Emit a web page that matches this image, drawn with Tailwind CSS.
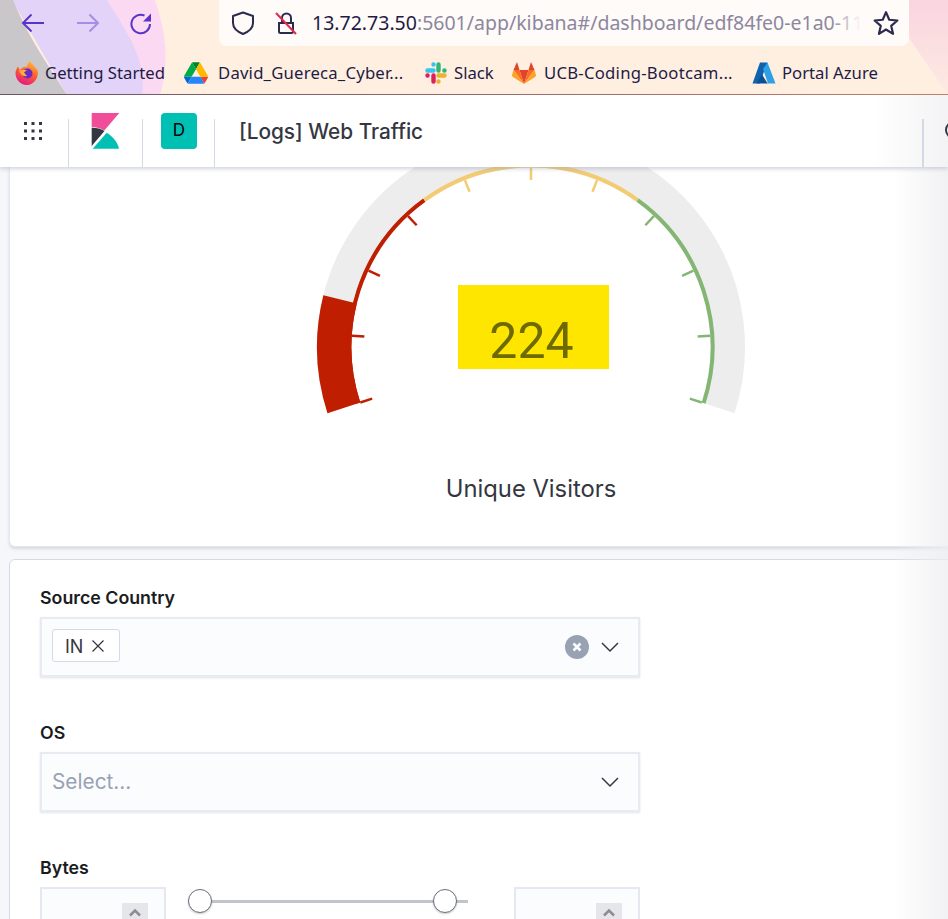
<!DOCTYPE html>
<html lang="en">
<head>
  <meta charset="UTF-8" />
  <title>[Logs] Web Traffic</title>
  <script src="https://cdn.jsdelivr.net/npm/@tailwindcss/browser@4"></script>
</head>
<body class="bg-[#f5f7fa]">
  <div class="relative w-[948px] h-[919px] overflow-hidden flex flex-col font-['Inter',sans-serif]">

    <!-- browser toolbar -->
    <div class="relative h-[95px] shrink-0 bg-[#feefe1] overflow-hidden">
      <svg class="absolute inset-0" width="948" height="95" viewBox="0 0 948 95">
        <defs><linearGradient id="tr" x1="0" y1="0" x2="0" y2="1"><stop offset="0" stop-color="#f9d5df"/><stop offset="1" stop-color="#fdeae2"/></linearGradient></defs>
        <path d="M105 0H155C165 30 170 60 160 95H67Z" fill="#fbd9f3"/>
        <path d="M12 0H107C125 30 148 60 142 95H67Z" fill="#e3d3f8"/>
        <path d="M0 0H13C30 40 45 60 67 95H0Z" fill="#c9c7c9"/>
        <path d="M905 0H948V95L905 32Z" fill="url(#tr)"/>
      </svg>
      <div class="relative flex h-[46px]">
        <div class="w-[219px] shrink-0 flex items-center pl-[21px] gap-[31px]">
          <svg width="24" height="24" viewBox="0 0 24 24" fill="none" stroke="#5a34c8" stroke-width="2"><path d="M23 12H2M10.500 3.500L2 12L10.500 20.500"/></svg>
          <svg width="24" height="24" viewBox="0 0 24 24" fill="none" stroke="#a48fe6" stroke-width="2"><path d="M1 12H22M13.500 3.500L22 12L13.500 20.500"/></svg>
          <svg class="-ml-px" width="24" height="24" viewBox="0 0 24 24" fill="none"><path d="M20 13A9.300 9.300 0 1 1 14.500 4.500" stroke="#5a34c8" stroke-width="2"/><path d="M21 2.500V10.500H13Z" fill="#5a34c8"/></svg>
        </div>
        <div class="w-[690px] shrink-0 flex items-center bg-[#fffbf8] rounded-b-lg pl-[12px]">
          <svg class="shrink-0" width="24" height="24" viewBox="0 0 24 24" fill="none" stroke="#2c2a4e" stroke-width="2" stroke-linejoin="round"><path d="M12 1.500L22 5V12C22 17 18 20.500 12 23C6 20.500 2 17 2 12V5Z"/></svg>
          <svg class="shrink-0 ml-[19px]" width="24" height="24" viewBox="0 0 24 24" fill="none" stroke-width="2"><path d="M8 12V7A4.500 4.500 0 0 1 17 7V12M5 12H19V20.500A1.500 1.500 0 0 1 17.500 22H6.500A1.500 1.500 0 0 1 5 20.500Z" stroke="#2c2a4e"/><path d="M2 2L22 23" stroke="#e4294f"/></svg>
          <div class="relative flex-1 min-w-0 ml-[14px] whitespace-nowrap text-[19.500px] font-['Noto_Sans',sans-serif] text-[#8d86a0]">
            <span class="text-[#1e1b45]">13.72.73.50</span>:5601/app/kibana#/dashboard/edf84fe0-e1a0-11
            <div class="absolute right-0 top-0 bottom-0 w-[30px] bg-linear-to-r from-[#fffbf8]/0 to-[#fffbf8]"></div>
          </div>
          <svg class="shrink-0 ml-[12px] mr-[10px]" width="26" height="26" viewBox="0 0 24 24" fill="none" stroke="#2c2a4e" stroke-width="2" stroke-linejoin="round"><path d="M12 2L15 9L22.500 9.700L16.800 14.600L18.500 22L12 18L5.500 22L7.200 14.600L1.500 9.700L9 9Z"/></svg>
        </div>
      </div>

      <!-- bookmarks -->
      <div class="relative flex items-center h-[48px] pt-[6px] pl-[15px] text-[16.700px] text-[#1e1b45] font-['Noto_Sans',sans-serif] whitespace-nowrap">
        <div class="w-[169px] flex items-center gap-[6px]">
          <svg width="24" height="24" viewBox="0 0 24 24">
            <defs><linearGradient id="fx" x1="0.700" y1="0" x2="0.300" y2="1"><stop offset="0" stop-color="#ffbd30"/><stop offset="0.500" stop-color="#ff5a36"/><stop offset="1" stop-color="#e31587"/></linearGradient></defs>
            <path d="M15 0C17 3 20 6 22.500 9C24.500 16 19 24 12 24C5 24 .5 18 .5 12C.5 9 2 7 3 5.500L5 9C7 6 10 5 12 6C12 4 13 2 15 0Z" fill="url(#fx)"/>
            <circle cx="12.500" cy="12.500" r="5" fill="#6a2bc4"/>
            <path d="M4 9H12L9 11.500L12 15C8 16 5 13 4 9Z" fill="#ffb03a"/>
          </svg>
          <span>Getting Started</span>
        </div>
        <div class="w-[240px] flex items-center gap-[10px]">
          <svg width="24" height="22" viewBox="0 0 87.300 78">
            <path d="m6.600 66.850 3.850 6.650c.8 1.400 1.950 2.500 3.300 3.300l13.750-23.800h-27.500c0 1.550.4 3.100 1.200 4.500z" fill="#0066da"/>
            <path d="m43.650 25-13.750-23.800c-1.350.8-2.500 1.900-3.300 3.300l-25.400 44a9.060 9.060 0 0 0 -1.200 4.500h27.500z" fill="#00ac47"/>
            <path d="m73.550 76.800c1.350-.8 2.500-1.900 3.300-3.300l1.600-2.750 7.650-13.250c.8-1.400 1.200-2.950 1.200-4.500h-27.502l5.852 11.500z" fill="#ea4335"/>
            <path d="m43.650 25 13.750-23.800c-1.350-.8-2.900-1.200-4.500-1.200h-18.500c-1.600 0-3.150.45-4.500 1.200z" fill="#00832d"/>
            <path d="m59.800 53h-32.300l-13.750 23.800c1.350.8 2.900 1.200 4.500 1.200h50.800c1.600 0 3.150-.45 4.500-1.200z" fill="#2684fc"/>
            <path d="m73.400 26.500-12.700-22c-.8-1.400-1.950-2.500-3.300-3.300l-13.750 23.800 16.150 28h27.450c0-1.550-.4-3.100-1.200-4.500z" fill="#ffba00"/>
          </svg>
          <span class="tracking-[0.2px]">David_Guereca_Cyber...</span>
        </div>
        <div class="w-[88px] flex items-center gap-[6px]">
          <svg width="24" height="24" viewBox="0 0 24 24" fill="none" stroke-width="4.400" stroke-linecap="round">
            <path d="M3.500 9.500H9.500M9.500 3.500V3.600" stroke="#36c5f0"/>
            <path d="M14.500 3.500V9.500M20.500 9.500H20.400" stroke="#2eb67d"/>
            <path d="M14.500 14.500H20.500M14.500 20.500V20.400" stroke="#ecb22e"/>
            <path d="M9.500 14.500V20.500M3.500 14.500H3.600" stroke="#e01e5a"/>
          </svg>
          <span>Slack</span>
        </div>
        <div class="w-[240px] flex items-center gap-[8px]">
          <svg width="24" height="24" viewBox="0 0 24 24">
            <path d="M12 23L7.500 9H16.500Z" fill="#e24329"/>
            <path d="M12 23L7.500 9H1.500Z" fill="#fc6d26"/>
            <path d="M12 23L16.500 9H22.500Z" fill="#fc6d26"/>
            <path d="M1.500 9L0 14C0 15 .5 15.500 1 16L12 23Z" fill="#fca326"/>
            <path d="M22.500 9L24 14C24 15 23.500 15.500 23 16L12 23Z" fill="#fca326"/>
            <path d="M7.500 9L5 1L1.500 9Z" fill="#e24329"/>
            <path d="M16.500 9L19 1L22.500 9Z" fill="#e24329"/>
          </svg>
          <span class="tracking-[0.25px]">UCB-Coding-Bootcam...</span>
        </div>
        <div class="flex items-center gap-[6px]">
          <svg width="24" height="24" viewBox="0 0 24 24">
            <path d="M8 1.500H15.500L7.500 22.500H.5Z" fill="#0f62ad"/>
            <path d="M10 13.500L15 21.500L16 22.500H4.500Z" fill="#0a4f94"/>
            <path d="M15.500 1.500L23.500 22.500H16L11 8Z" fill="#2f9fe6"/>
          </svg>
          <span>Portal Azure</span>
        </div>
      </div>
      <div class="relative h-px bg-linear-to-r from-[#66545e] to-[#c2806f]"></div>
    </div>

    <!-- kibana header -->
    <div class="relative z-30 h-[72px] shrink-0 flex bg-linear-to-r from-white from-[92%] to-[#f3f3f5] shadow-[0_2px_4px_rgba(152,162,179,0.45)] overflow-hidden">
      <div class="w-[68px] shrink-0 flex items-center pl-[24px]">
        <svg width="18" height="18" viewBox="0 0 18 18" fill="#343741">
          <rect x="0" y="0" width="3" height="3"/><rect x="7.500" y="0" width="3" height="3"/><rect x="15" y="0" width="3" height="3"/>
          <rect x="0" y="7.500" width="3" height="3"/><rect x="7.500" y="7.500" width="3" height="3"/><rect x="15" y="7.500" width="3" height="3"/>
          <rect x="0" y="15" width="3" height="3"/><rect x="7.500" y="15" width="3" height="3"/><rect x="15" y="15" width="3" height="3"/>
        </svg>
      </div>
      <div class="w-px shrink-0 self-end h-[48px] bg-[#d3dae6]"></div>
      <div class="w-[73px] shrink-0 flex items-center pl-[22px]">
        <svg width="29" height="37" viewBox="0 0 29 37">
          <path d="M.7 0H28.300L13.300 17.500C10 15.200 5 14 .7 14Z" fill="#f04e98"/>
          <path d="M.7 14.700C5 14.500 9.500 15.500 13.500 18L.7 33Z" fill="#343741"/>
          <path d="M1.700 35.700L15.700 19.700C22 23.500 26.500 29 28 35.700Z" fill="#00bfb3"/>
        </svg>
      </div>
      <div class="w-px shrink-0 self-end h-[48px] bg-[#d3dae6]"></div>
      <div class="w-[71px] shrink-0 flex items-center pl-[18px]">
        <div class="w-[36px] h-[36px] rounded-[4px] bg-[#00bfb3] flex items-center justify-center text-[17px] text-black">D</div>
      </div>
      <div class="w-px shrink-0 self-end h-[48px] bg-[#d3dae6]"></div>
      <div class="flex-1 flex items-center pl-[24px] pt-[2px] text-[20.800px] font-medium text-[#343741]">[Logs] Web Traffic</div>
      <div class="w-[2px] shrink-0 self-end h-[48px] bg-[#d3dae6]"></div>
      <div class="w-[24px] shrink-0 flex items-center pl-[21px]">
        <svg class="shrink-0" width="20" height="20" viewBox="0 0 20 20" fill="none" stroke="#343741" stroke-width="2"><circle cx="9" cy="9" r="8"/></svg>
      </div>
    </div>

    <!-- dashboard -->
    <div class="flex-1 min-h-0 pl-[9px] flex flex-col gap-[12px] overflow-hidden">
      <div class="w-[1040px] h-[380px] shrink-0 bg-white border border-t-0 border-[#e3e7ef] rounded-b-[6px] shadow-[0_2px_3px_rgba(152,162,179,0.35)]">
        <div class="relative ml-[301px] w-[440px]">
          <svg class="block" width="440" height="260" viewBox="311 167 440 260" fill="none">
            <path d="M343.880 407.800A196.750 196.750 0 1 1 718.120 407.800" stroke="#ededed" stroke-width="34.500"/>
            <path d="M343.880 407.800A196.750 196.750 0 0 1 340.090 299.400" stroke="#bf1e00" stroke-width="34.500"/>
            <path d="M358.380 403.090A181.500 181.500 0 0 1 424.320 200.160" stroke="#bf1e00" stroke-width="4"/>
            <path d="M424.320 200.160A181.500 181.500 0 0 1 637.680 200.160" stroke="#f2cb73" stroke-width="4"/>
            <path d="M637.680 200.160A181.500 181.500 0 0 1 703.620 403.090" stroke="#84b673" stroke-width="4"/>
            <g stroke-width="2.500">
              <line x1="531" y1="167.500" x2="531" y2="180" stroke="#bf1e00" transform="rotate(-108 531 347)"/>
              <line x1="531" y1="167.500" x2="531" y2="180" stroke="#bf1e00" transform="rotate(-86.400 531 347)"/>
              <line x1="531" y1="167.500" x2="531" y2="180" stroke="#bf1e00" transform="rotate(-64.800 531 347)"/>
              <line x1="531" y1="167.500" x2="531" y2="180" stroke="#bf1e00" transform="rotate(-43.200 531 347)"/>
              <line x1="531" y1="167.500" x2="531" y2="180" stroke="#f2cb73" transform="rotate(-21.600 531 347)"/>
              <line x1="531" y1="167.500" x2="531" y2="180" stroke="#f2cb73"/>
              <line x1="531" y1="167.500" x2="531" y2="180" stroke="#f2cb73" transform="rotate(21.600 531 347)"/>
              <line x1="531" y1="167.500" x2="531" y2="180" stroke="#84b673" transform="rotate(43.200 531 347)"/>
              <line x1="531" y1="167.500" x2="531" y2="180" stroke="#84b673" transform="rotate(64.800 531 347)"/>
              <line x1="531" y1="167.500" x2="531" y2="180" stroke="#84b673" transform="rotate(86.400 531 347)"/>
              <line x1="531" y1="167.500" x2="531" y2="180" stroke="#84b673" transform="rotate(108 531 347)"/>
            </g>
          </svg>
          <div class="absolute left-[147px] top-[118px] w-[151px] h-[84px] bg-[#ffe600] flex items-center justify-center pt-[27px] pr-[4px] text-[50px] leading-none font-['Roboto',sans-serif] text-[#6e6a00]">224</div>
          <div class="mt-[46px] text-center text-[23.800px] leading-[32px] text-[#343741]">Unique Visitors</div>
        </div>
      </div>

      <div class="w-[1040px] flex-1 bg-white border border-[#d3dae6] rounded-t-[6px] pl-[30px] pt-[26px]">
        <div class="w-[600px]">
          <div class="text-[17.800px] leading-[24px] font-semibold text-[#1a1c21]">Source Country</div>
          <div class="mt-[7px] h-[60px] flex items-center pl-[10px] pr-[17px] bg-[#fbfcfd] border-2 border-[#e9ebf3] shadow-[0_1px_2px_rgba(152,162,179,0.3)]">
            <div class="-mt-[3px] h-[33px] w-[68px] flex items-center pl-[12px] pt-px gap-[8px] bg-white border border-[#d3dae6] rounded-[3px] text-[18px] text-[#343741]">
              IN
              <svg width="14" height="14" viewBox="0 0 14 14" fill="none" stroke="#343741" stroke-width="1.200"><path d="M1.500 1.500L12.500 12.500M12.500 1.500L1.500 12.500"/></svg>
            </div>
            <svg class="ml-auto" width="24" height="24" viewBox="0 0 24 24" fill="none"><circle cx="12" cy="12" r="12" fill="#98a2b3"/><path d="M8.500 8.500L15.500 15.500M15.500 8.500L8.500 15.500" stroke="#fff" stroke-width="2.500"/></svg>
            <svg class="ml-[10px]" width="22" height="22" viewBox="0 0 22 22" fill="none" stroke="#343741" stroke-width="1.500"><path d="M3 7L11 15L19 7"/></svg>
          </div>

          <div class="mt-[44px] text-[17.800px] leading-[24px] font-semibold text-[#1a1c21]">OS</div>
          <div class="mt-[7px] h-[60px] flex items-center pl-[10px] pr-[17px] bg-[#fbfcfd] border-2 border-[#e9ebf3] shadow-[0_1px_2px_rgba(152,162,179,0.3)]">
            <span class="text-[20.800px] text-[#98a2b3]">Select...</span>
            <svg class="ml-auto" width="22" height="22" viewBox="0 0 22 22" fill="none" stroke="#343741" stroke-width="1.500"><path d="M3 7L11 15L19 7"/></svg>
          </div>

          <div class="mt-[44px] text-[17.800px] leading-[24px] font-semibold text-[#1a1c21]">Bytes</div>
          <div class="mt-[7px] flex items-start">
            <div class="w-[126px] h-[60px] shrink-0 bg-[#fbfcfd] border-2 border-[#e6e8f1] pl-[80px] pt-[14px]">
              <div class="w-[26px] h-[24px] bg-[#e6e6ea] flex items-start justify-center pt-[5px]">
                <svg width="14" height="9" viewBox="0 0 14 9" fill="none" stroke="#8a8d97" stroke-width="2.500"><path d="M2 7.500L7 2.500L12 7.500"/></svg>
              </div>
            </div>
            <div class="relative w-[348px] h-[28px] flex items-center">
              <div class="ml-[34px] w-[268px] h-[3px] bg-[#c1c5cb]"></div>
              <div class="absolute left-[22px] top-[2px] w-[24px] h-[24px] rounded-full bg-white border border-[#6a6f7d] shadow-[0_1px_2px_rgba(0,0,0,0.2)]"></div>
              <div class="absolute left-[267px] top-[2px] w-[24px] h-[24px] rounded-full bg-white border border-[#6a6f7d] shadow-[0_1px_2px_rgba(0,0,0,0.2)]"></div>
            </div>
            <div class="w-[126px] h-[60px] shrink-0 bg-[#fbfcfd] border-2 border-[#e6e8f1] pl-[80px] pt-[14px]">
              <div class="w-[26px] h-[24px] bg-[#e6e6ea] flex items-start justify-center pt-[5px]">
                <svg width="14" height="9" viewBox="0 0 14 9" fill="none" stroke="#8a8d97" stroke-width="2.500"><path d="M2 7.500L7 2.500L12 7.500"/></svg>
              </div>
            </div>
          </div>
        </div>
      </div>
    </div>

    <!-- soft fade on the right edge -->
    <div class="absolute z-20 right-0 top-[167px] bottom-0 w-[55px] bg-linear-to-r from-white/0 to-[#eeeef1]/80 pointer-events-none"></div>
  </div>
</body>
</html>
